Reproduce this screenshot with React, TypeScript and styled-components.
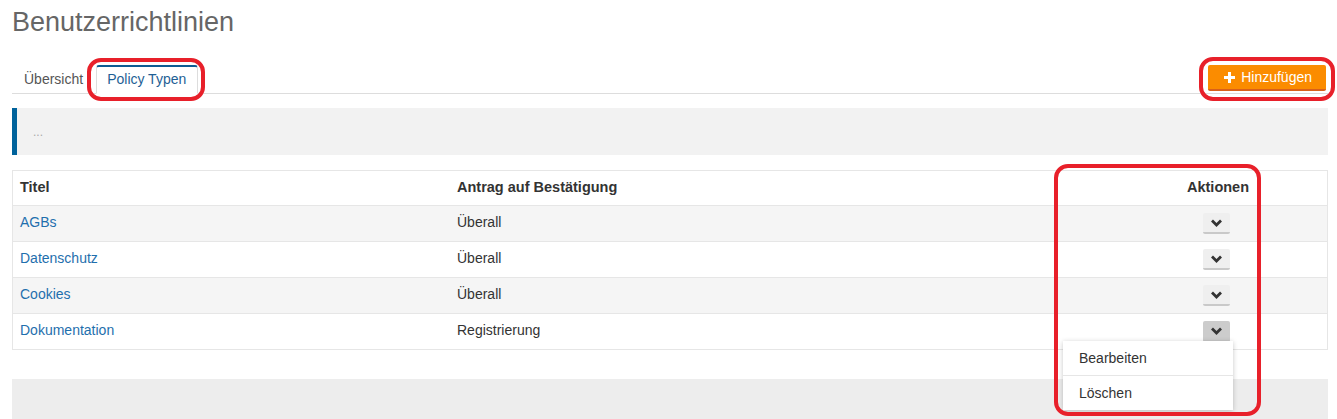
import React from "react";
import styled, { createGlobalStyle } from "styled-components";

const GlobalStyle = createGlobalStyle`
  html, body {
    margin: 0;
    padding: 0;
    background: #ffffff;
    font-family: "Liberation Sans", Arial, sans-serif;
    font-size: 14px;
    color: #333333;
  }
`;

type PolicyType = {
  title: string;
  request: string;
};

const POLICY_TYPES: PolicyType[] = [
  { title: "AGBs", request: "Überall" },
  { title: "Datenschutz", request: "Überall" },
  { title: "Cookies", request: "Überall" },
  { title: "Dokumentation", request: "Registrierung" },
];

const ChevronIcon = () => (
  <svg width="11" height="8" viewBox="0 0 11 8">
    <path d="M1 1.6 L5.5 6 L10 1.6" fill="none" stroke="currentColor" strokeWidth="2.8" />
  </svg>
);

const PlusIcon = () => (
  <svg width="11" height="11" viewBox="0 0 11 11">
    <path d="M5.5 0 V11 M0 5.5 H11" stroke="currentColor" strokeWidth="3" />
  </svg>
);

/**
 * Policy type overview with the tab bar, an info box, the table and the
 * opened action menu of the last row.
 */
export default function App() {
  return (
    <>
      <GlobalStyle />
      <Page>
        <Title>Benutzerrichtlinien</Title>

        <TabBar>
          <Tabs>
            <Tab>Übersicht</Tab>
            <Tab $active>Policy Typen</Tab>
          </Tabs>
          <AddButton>
            <PlusIcon />
            Hinzufügen
          </AddButton>
        </TabBar>

        <InfoBox>...</InfoBox>

        <Table>
          <HeaderRow>
            <Cell>Titel</Cell>
            <Cell>Antrag auf Bestätigung</Cell>
            <ActionCell $header>Aktionen</ActionCell>
          </HeaderRow>
          {POLICY_TYPES.map((policy, index) => {
            const isOpen = index === POLICY_TYPES.length - 1;
            return (
              <Row key={policy.title} $striped={index % 2 === 0}>
                <Cell>
                  <TitleLink>{policy.title}</TitleLink>
                </Cell>
                <Cell>{policy.request}</Cell>
                <ActionCell>
                  <ChevronButton $open={isOpen}>
                    <ChevronIcon />
                  </ChevronButton>
                  {isOpen ? (
                    <Menu>
                      <MenuItem>Bearbeiten</MenuItem>
                      <MenuItem>Löschen</MenuItem>
                    </Menu>
                  ) : null}
                </ActionCell>
              </Row>
            );
          })}
        </Table>

        <FooterPanel />

        {/* red review markers drawn on top of the screenshot */}
        <Marker style={{ left: 87, top: 58, width: 118, height: 43 }} />
        <Marker style={{ left: 1199, top: 57, width: 136, height: 44 }} />
        <Marker style={{ left: 1054, top: 164, width: 207, height: 252 }} />
      </Page>
    </>
  );
}

const Page = styled.div`
  position: relative;
  padding: 0 9px 0 12px;
  height: 419px;
  overflow: hidden;
`;

const Title = styled.h1`
  margin: 0;
  padding-top: 6px;
  font-size: 27px;
  line-height: 32px;
  font-weight: normal;
  color: #666666;
`;

const TabBar = styled.div`
  display: flex;
  justify-content: space-between;
  align-items: flex-end;
  margin-top: 27px;
  border-bottom: 1px solid #dddddd;
  height: 28px;
`;

const Tabs = styled.div`
  display: flex;
  align-items: flex-end;
  height: 100%;
`;

const Tab = styled.div<{ $active?: boolean }>`
  box-sizing: border-box;
  height: 29px;
  margin-bottom: -1px;
  padding: 5px 11px 0;
  font-size: 14px;
  line-height: 17px;
  color: #555555;
  border: 1px solid transparent;

  ${({ $active }) =>
    $active
      ? `
      margin-left: 1px;
      padding: 4px 11px 0 10px;
      color: #1f5f95;
      background: #ffffff;
      border-color: #dddddd;
      border-top: 2px solid #0d5c93;
      border-bottom-color: #ffffff;
      border-radius: 3px 3px 0 0;
    `
      : ""}
`;

const AddButton = styled.button`
  display: flex;
  align-items: center;
  gap: 6px;
  box-sizing: border-box;
  height: 26px;
  margin: 0 2px 2px 0;
  padding: 0 14px 0 16px;
  border: none;
  border-bottom: 2px solid #d9601b;
  border-radius: 2px;
  background: #fb8c00;
  color: #ffffff;
  font-family: inherit;
  font-size: 14px;
`;

const InfoBox = styled.div`
  box-sizing: border-box;
  height: 47px;
  margin-top: 14px;
  padding: 17px 0 0 16px;
  background: #f2f2f2;
  border-left: 5px solid #00629b;
  color: #aaaaaa;
  font-size: 12px;
`;

const Table = styled.div`
  margin-top: 15px;
  border: 1px solid #e6e6e6;
`;

const HeaderRow = styled.div`
  display: grid;
  grid-template-columns: 437px 656px 1fr;
  height: 34px;
  padding-bottom: 2px;
  box-sizing: border-box;
  align-items: center;
  font-weight: bold;
  font-size: 14.5px;
  color: #333333;
`;

const Row = styled.div<{ $striped?: boolean }>`
  display: grid;
  grid-template-columns: 437px 656px 1fr;
  height: 35px;
  box-sizing: content-box;
  align-items: center;
  border-top: 1px solid #e6e6e6;
  background: ${({ $striped }) => ($striped ? "#f5f5f5" : "#ffffff")};
  font-size: 14px;

  & > div {
    margin-top: -3px;
  }
`;

const Cell = styled.div`
  padding: 0 7px;
`;

const ActionCell = styled.div<{ $header?: boolean }>`
  position: relative;
  display: flex;
  justify-content: center;
  padding-left: ${({ $header }) => ($header ? "3px" : "0")};
`;

const TitleLink = styled.a`
  color: #1f6fad;
  text-decoration: none;
`;

const ChevronButton = styled.button<{ $open?: boolean }>`
  display: flex;
  align-items: center;
  justify-content: center;
  box-sizing: border-box;
  width: 27px;
  height: 21px;
  padding: 0;
  margin-top: 3px;
  border: none;
  border-bottom: 2px solid #c9c9c9;
  border-radius: 2px;
  background: ${({ $open }) => ($open ? "#cccccc" : "#efefef")};
  color: #333333;
`;

const Menu = styled.div`
  position: absolute;
  top: 23px;
  left: -43px;
  width: 170px;
  background: #ffffff;
  box-shadow: 0 1px 5px rgba(0, 0, 0, 0.22);
  z-index: 2;
`;

const MenuItem = styled.div`
  height: 34px;
  line-height: 34px;
  padding-left: 16px;
  font-size: 14px;
  font-weight: normal;
  color: #333333;

  & + & {
    border-top: 1px solid #e6e6e6;
  }
`;

const FooterPanel = styled.div`
  height: 60px;
  margin-top: 29px;
  background: #ededed;
`;

const Marker = styled.div`
  position: absolute;
  box-sizing: border-box;
  border: 4px solid #e8202a;
  border-radius: 14px;
  pointer-events: none;
  z-index: 3;
`;
